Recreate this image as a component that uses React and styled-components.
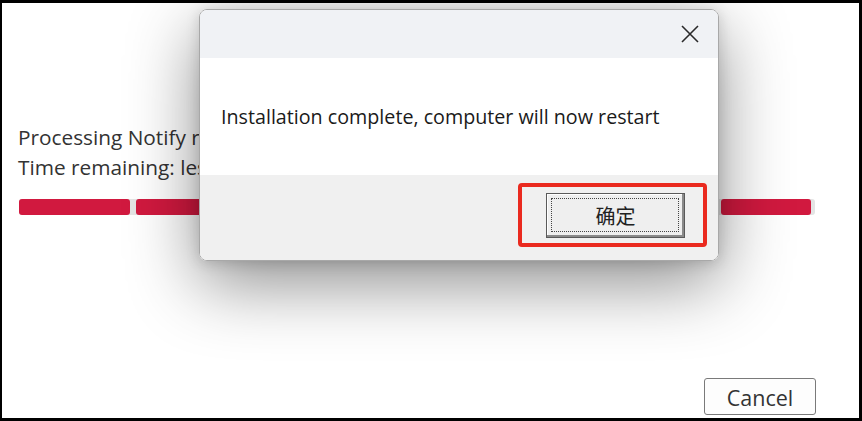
import React from "react";
import styled, { createGlobalStyle } from "styled-components";

const Global = createGlobalStyle`
  html, body { margin: 0; padding: 0; background: #fff; overflow: hidden; }
  * { box-sizing: border-box; }
`;

const Frame = styled.div`
  position: relative;
  width: 862px;
  height: 421px;
  border-style: solid;
  border-color: #000;
  border-width: 3px 3px 3px 2px;
  background: #fff;
  display: flex;
  flex-direction: column;
  padding: 119px 43px 0 16px;
  font-family: "Open Sans", "Noto Sans", sans-serif;
  color: #333;
`;

const Status = styled.div`
  font-size: 20.8px;
  line-height: 30px;
  white-space: nowrap;
`;

const Track = styled.div`
  margin-top: 17px;
  margin-left: 1px;
  width: 796px;
  height: 16px;
  background: #e4e4e4;
  border-radius: 3px;
  display: flex;
  gap: 6px;
`;

const Segment = styled.div`
  width: ${(p) => p.$w}px;
  height: 16px;
  background: #d1193f;
  border-radius: 3px;
`;

const Actions = styled.div`
  margin-top: auto;
  display: flex;
  justify-content: flex-end;
  padding-bottom: 3px;
`;

const CancelButton = styled.button`
  width: 112px;
  height: 37px;
  border: 1px solid #7a7a7a;
  border-radius: 3px;
  background: #fdfdfd;
  font-family: "Open Sans", "Noto Sans", sans-serif;
  font-size: 21.5px;
  color: #333;
  padding: 2px 0 0;
`;

const Dialog = styled.div`
  position: absolute;
  left: 197px;
  top: 6px;
  width: 520px;
  height: 252px;
  border: 1px solid #a8a8a8;
  border-radius: 8px;
  overflow: hidden;
  display: flex;
  flex-direction: column;
  box-shadow: 0 22px 70px rgba(0, 0, 0, 0.45), 0 2px 14px rgba(0, 0, 0, 0.15);
  font-family: "Open Sans", "Noto Sans", sans-serif;
`;

const TitleBar = styled.div`
  height: 48px;
  background: #f0f2f5;
  display: flex;
  justify-content: flex-end;
  align-items: center;
  padding-right: 19px;
`;

const Body = styled.div`
  height: 117px;
  background: #fff;
  display: flex;
  align-items: center;
  padding-left: 21px;
  font-size: 19.7px;
  color: #1a1a1a;
  white-space: nowrap;
`;

const Footer = styled.div`
  flex: 1;
  background: #f0f0f0;
  display: flex;
  justify-content: flex-end;
  align-items: flex-start;
  padding: 8px 11px 0 0;
`;

const Highlight = styled.div`
  border: 4px solid #ea2a1f;
  border-radius: 4px;
  padding: 6px 18px 5px 24px;
`;

const OkButton = styled.button`
  position: relative;
  width: 139px;
  height: 45px;
  border: 1px solid #5a5a5a;
  background: #efefef;
  box-shadow: inset -2px -2px #8a8a8a, inset 1px 1px #fff;
  font-family: "Noto Sans CJK SC", sans-serif;
  font-size: 20px;
  color: #222;
  padding: 0;
  &::after {
    content: "";
    position: absolute;
    inset: 4px 5px 5px 4px;
    border: 1px dotted #444;
  }
`;

export default function App() {
  return (
    <>
      <Global />
      <Frame>
        <Status>
          Processing Notify registration
          <br />
          Time remaining: less than 1 minute
        </Status>
        <Track>
          {[111, 111, 111, 111, 111, 111, 90].map((w, i) => (
            <Segment key={i} $w={w} />
          ))}
        </Track>
        <Actions>
          <CancelButton>Cancel</CancelButton>
        </Actions>
        <Dialog>
          <TitleBar>
            <svg width="18" height="18" viewBox="0 0 18 18">
              <path d="M1 1 L17 17 M17 1 L1 17" stroke="#2a2a2a" strokeWidth="1.6" fill="none" />
            </svg>
          </TitleBar>
          <Body>Installation complete, computer will now restart</Body>
          <Footer>
            <Highlight>
              <OkButton>确定</OkButton>
            </Highlight>
          </Footer>
        </Dialog>
      </Frame>
    </>
  );
}
